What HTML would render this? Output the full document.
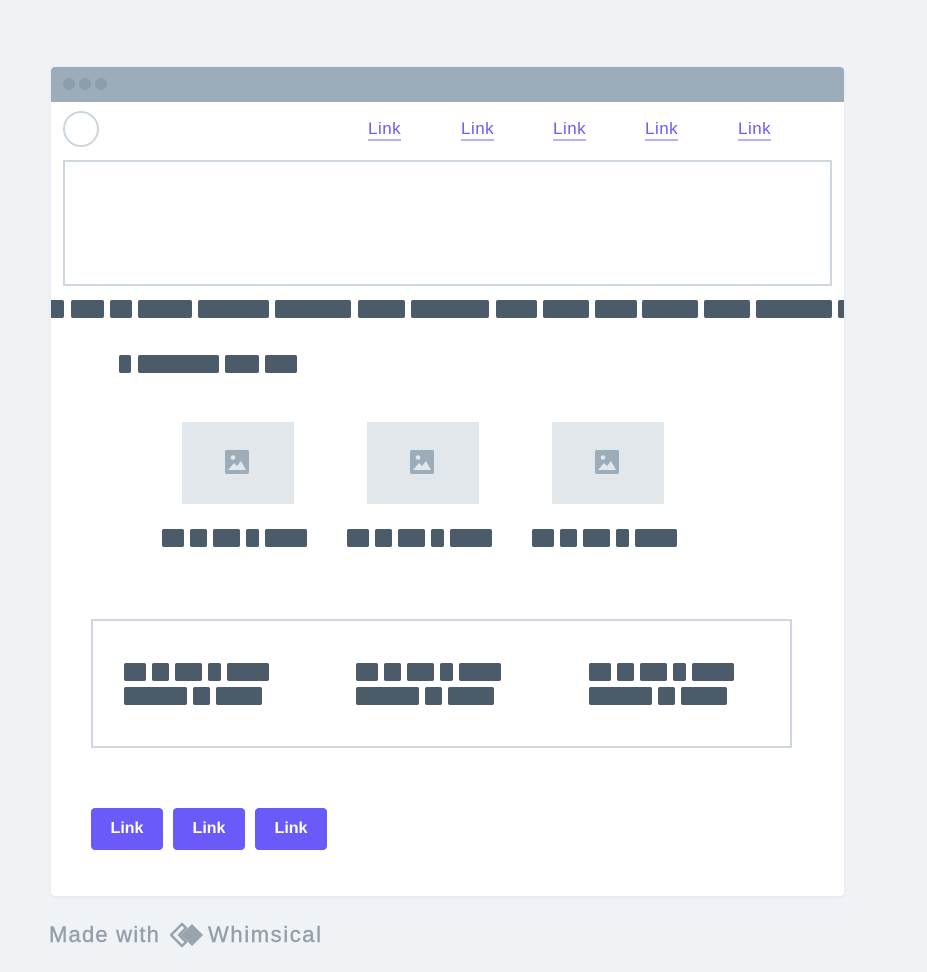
<!DOCTYPE html>
<html><head><meta charset="utf-8"><style>
*{margin:0;padding:0;box-sizing:border-box}
body{width:927px;height:972px;background:#eff3f6;position:relative;overflow:hidden;font-family:"Liberation Sans",sans-serif}
.a{position:absolute}
.b{position:absolute;background:#4b5b69;border-radius:2px}
.card{left:51px;top:67px;width:793px;height:829px;background:#fff;border-radius:4px;box-shadow:0 1px 3px rgba(0,0,0,.06)}
.hdr{left:51px;top:67px;width:793px;height:35px;background:#9cacb9;border-radius:4px 4px 0 0}
.dot{width:12px;height:12px;border-radius:50%;background:#8c9dab;top:78px}
.lk{top:119px;font-size:17px;color:#6b5cf6;border-bottom:2px solid #b8b0fb;line-height:20px;letter-spacing:0.5px}
.img{width:112px;height:82px;background:#e2e7ec;top:422px}
.btn{top:808px;width:72px;height:42px;background:#6a5af9;border-radius:4px;color:#fff;font-weight:bold;font-size:16px;text-align:center;line-height:42px}
.ft{font-size:22px;color:#959fa9;line-height:28px;top:921px;-webkit-text-stroke:0.4px #959fa9}
</style></head><body>
<div class="a card"></div>
<div class="a hdr"></div>
<div class="a dot" style="left:63px"></div><div class="a dot" style="left:79px"></div><div class="a dot" style="left:95px"></div>
<div class="a" style="left:63px;top:111px;width:36px;height:36px;border:2px solid #cbd5de;border-radius:50%"></div>
<div class="a lk" style="left:368px">Link</div>
<div class="a lk" style="left:461px">Link</div>
<div class="a lk" style="left:553px">Link</div>
<div class="a lk" style="left:645px">Link</div>
<div class="a lk" style="left:738px">Link</div>
<div class="a" style="left:63px;top:160px;width:769px;height:126px;border:2px solid #cfd8e0"></div>
<div class="b" style="left:51px;top:300px;width:13px;height:18px;border-radius:0 2px 2px 0"></div>
<div class="b" style="left:71px;top:300px;width:33px;height:18px"></div>
<div class="b" style="left:110px;top:300px;width:22px;height:18px"></div>
<div class="b" style="left:138px;top:300px;width:54px;height:18px"></div>
<div class="b" style="left:198px;top:300px;width:71px;height:18px"></div>
<div class="b" style="left:275px;top:300px;width:76px;height:18px"></div>
<div class="b" style="left:358px;top:300px;width:47px;height:18px"></div>
<div class="b" style="left:411px;top:300px;width:78px;height:18px"></div>
<div class="b" style="left:496px;top:300px;width:41px;height:18px"></div>
<div class="b" style="left:543px;top:300px;width:46px;height:18px"></div>
<div class="b" style="left:595px;top:300px;width:42px;height:18px"></div>
<div class="b" style="left:642px;top:300px;width:56px;height:18px"></div>
<div class="b" style="left:704px;top:300px;width:46px;height:18px"></div>
<div class="b" style="left:756px;top:300px;width:76px;height:18px"></div>
<div class="b" style="left:838px;top:300px;width:6px;height:18px;border-radius:2px 0 0 2px"></div>
<div class="b" style="left:119px;top:355px;width:12px;height:18px"></div>
<div class="b" style="left:138px;top:355px;width:81px;height:18px"></div>
<div class="b" style="left:225px;top:355px;width:34px;height:18px"></div>
<div class="b" style="left:265px;top:355px;width:32px;height:18px"></div>
<div class="a img" style="left:182px"></div>
<div class="a img" style="left:367px"></div>
<div class="a img" style="left:552px"></div>
<svg class="a" style="left:225px;top:450px" width="24" height="24" viewBox="0 0 24 24"><rect width="24" height="24" rx="2" fill="#9cacb9"/><circle cx="8" cy="7.5" r="2.3" fill="#e2e7ec"/><path d="M3 20 L9 13 L12 16 L16 11 L21 20 Z" fill="#e2e7ec"/></svg>
<svg class="a" style="left:410px;top:450px" width="24" height="24" viewBox="0 0 24 24"><rect width="24" height="24" rx="2" fill="#9cacb9"/><circle cx="8" cy="7.5" r="2.3" fill="#e2e7ec"/><path d="M3 20 L9 13 L12 16 L16 11 L21 20 Z" fill="#e2e7ec"/></svg>
<svg class="a" style="left:595px;top:450px" width="24" height="24" viewBox="0 0 24 24"><rect width="24" height="24" rx="2" fill="#9cacb9"/><circle cx="8" cy="7.5" r="2.3" fill="#e2e7ec"/><path d="M3 20 L9 13 L12 16 L16 11 L21 20 Z" fill="#e2e7ec"/></svg>
<div class="b" style="left:162px;top:529px;width:22px;height:18px"></div><div class="b" style="left:190px;top:529px;width:17px;height:18px"></div><div class="b" style="left:213px;top:529px;width:27px;height:18px"></div><div class="b" style="left:246px;top:529px;width:13px;height:18px"></div><div class="b" style="left:265px;top:529px;width:42px;height:18px"></div>
<div class="b" style="left:347px;top:529px;width:22px;height:18px"></div><div class="b" style="left:375px;top:529px;width:17px;height:18px"></div><div class="b" style="left:398px;top:529px;width:27px;height:18px"></div><div class="b" style="left:431px;top:529px;width:13px;height:18px"></div><div class="b" style="left:450px;top:529px;width:42px;height:18px"></div>
<div class="b" style="left:532px;top:529px;width:22px;height:18px"></div><div class="b" style="left:560px;top:529px;width:17px;height:18px"></div><div class="b" style="left:583px;top:529px;width:27px;height:18px"></div><div class="b" style="left:616px;top:529px;width:13px;height:18px"></div><div class="b" style="left:635px;top:529px;width:42px;height:18px"></div>
<div class="a" style="left:91px;top:619px;width:701px;height:129px;border:2px solid #cfd8e0"></div>
<div class="b" style="left:124px;top:663px;width:22px;height:18px"></div><div class="b" style="left:152px;top:663px;width:17px;height:18px"></div><div class="b" style="left:175px;top:663px;width:27px;height:18px"></div><div class="b" style="left:208px;top:663px;width:13px;height:18px"></div><div class="b" style="left:227px;top:663px;width:42px;height:18px"></div>
<div class="b" style="left:124px;top:687px;width:63px;height:18px"></div><div class="b" style="left:193px;top:687px;width:17px;height:18px"></div><div class="b" style="left:216px;top:687px;width:46px;height:18px"></div>
<div class="b" style="left:356px;top:663px;width:22px;height:18px"></div><div class="b" style="left:384px;top:663px;width:17px;height:18px"></div><div class="b" style="left:407px;top:663px;width:27px;height:18px"></div><div class="b" style="left:440px;top:663px;width:13px;height:18px"></div><div class="b" style="left:459px;top:663px;width:42px;height:18px"></div>
<div class="b" style="left:356px;top:687px;width:63px;height:18px"></div><div class="b" style="left:425px;top:687px;width:17px;height:18px"></div><div class="b" style="left:448px;top:687px;width:46px;height:18px"></div>
<div class="b" style="left:589px;top:663px;width:22px;height:18px"></div><div class="b" style="left:617px;top:663px;width:17px;height:18px"></div><div class="b" style="left:640px;top:663px;width:27px;height:18px"></div><div class="b" style="left:673px;top:663px;width:13px;height:18px"></div><div class="b" style="left:692px;top:663px;width:42px;height:18px"></div>
<div class="b" style="left:589px;top:687px;width:63px;height:18px"></div><div class="b" style="left:658px;top:687px;width:17px;height:18px"></div><div class="b" style="left:681px;top:687px;width:46px;height:18px"></div>
<div class="a btn" style="left:91px">Link</div>
<div class="a btn" style="left:173px">Link</div>
<div class="a btn" style="left:255px">Link</div>
<div class="a ft" style="left:49px;letter-spacing:1.2px">Made with</div>
<svg class="a" style="left:170px;top:922px" width="36" height="26" viewBox="0 0 36 26"><path d="M12 2 L1 13 L12 24 L16 20 L9 13 L16 6 Z" fill="none" stroke="#98a3ad" stroke-width="2.5" stroke-linejoin="round"/><path d="M22 2 L33 13 L22 24 L11 13 Z" fill="#98a3ad"/></svg>
<div class="a ft" style="left:208px;letter-spacing:1.6px">Whimsical</div>
</body></html>
